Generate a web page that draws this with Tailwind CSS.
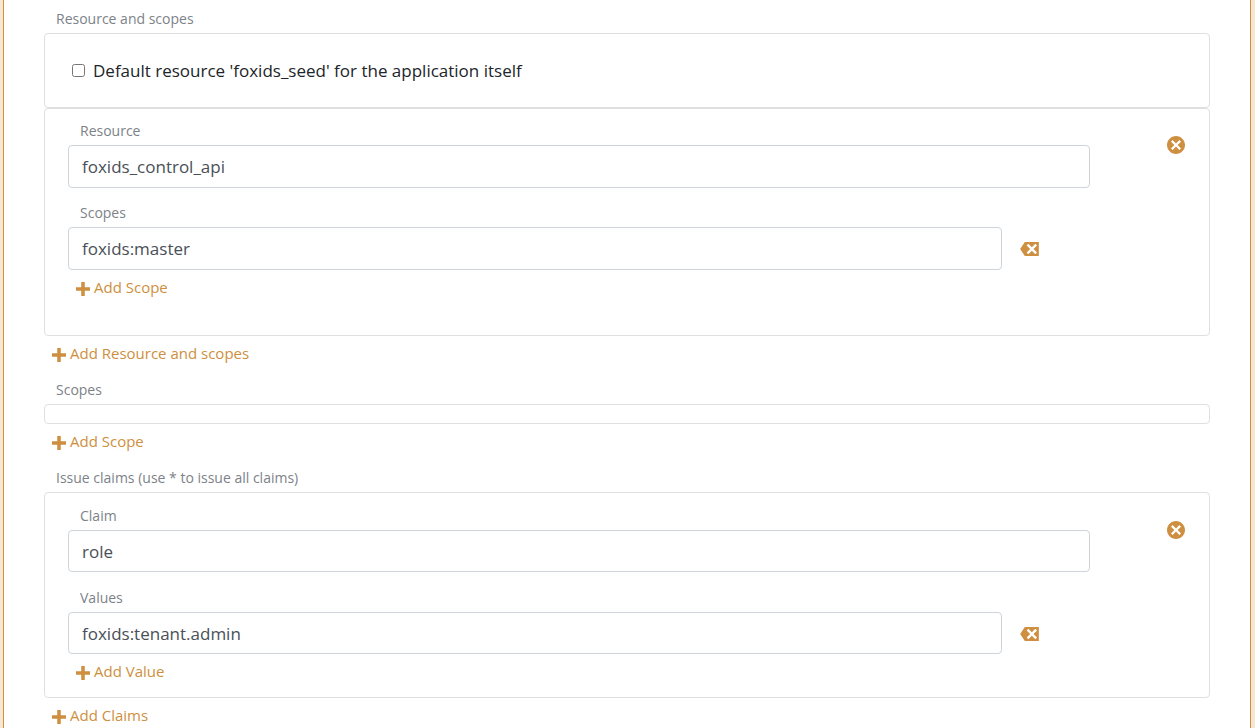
<!DOCTYPE html>
<html lang="en">
<head>
<meta charset="utf-8">
<meta name="viewport" content="width=device-width, initial-scale=1">
<title>Application resources and claims</title>
<script src="https://cdn.jsdelivr.net/npm/@tailwindcss/browser@4"></script>
</head>
<body class="bg-[#f7e6d3] px-[3px] font-['Segoe_UI','Open_Sans','Noto_Sans',sans-serif] text-[15px] text-[#7d8288]">
<svg class="hidden" aria-hidden="true">
  <symbol id="plus" viewBox="0 0 8 8"><path d="M3 0v3h-3v2h3v3h2v-3h3v-2h-3v-3h-2z"/></symbol>
  <symbol id="circle-x" viewBox="0 0 8 8"><path d="M4 0c-2.2 0-4 1.8-4 4s1.8 4 4 4 4-1.8 4-4-1.8-4-4-4zm-1.5 1.78l1.5 1.5 1.5-1.5.72.72-1.5 1.5 1.5 1.5-.72.72-1.5-1.5-1.5 1.5-.72-.72 1.5-1.5-1.5-1.5.72-.72z"/></symbol>
  <symbol id="delete" viewBox="0 0 8 6"><path d="M2 0l-2 3 2 3h6v-6h-6zm1.5.78l1.5 1.5 1.5-1.5.72.72-1.5 1.5 1.5 1.5-.72.72-1.5-1.5-1.5 1.5-.72-.72 1.5-1.5-1.5-1.5.72-.72z"/></symbol>
</svg>
<main class="mr-px min-h-screen border-x border-[#ce8f40] bg-white px-10 pt-[7px]">
  <form>
    <section>
      <h2 class="pb-[2px] pl-3 text-sm leading-6">Resource and scopes</h2>
      <div class="flex h-[75px] items-center rounded border border-[#dfdfdf] px-[27px]">
        <label class="flex items-center gap-2 text-[17px] text-[#212529]"><input type="checkbox" class="size-[13px]">Default resource 'foxids_seed' for the application itself</label>
      </div>
      <div class="flex rounded border border-[#dfdfdf] px-[23px] pt-[10px] pb-[29px]">
        <div class="flex-1">
          <label for="resource" class="block pb-[2px] pl-3 text-sm leading-6">Resource</label>
          <input id="resource" type="text" value="foxids_control_api" class="block h-[43px] w-full rounded border border-[#ced4da] px-[13px] text-[17px] text-[#495057]">
          <label for="scope" class="mt-[13px] block pb-[2px] pl-3 text-sm leading-6">Scopes</label>
          <div class="flex items-center">
            <input id="scope" type="text" value="foxids:master" class="block h-[43px] min-w-0 flex-1 rounded border border-[#ced4da] px-[13px] text-[17px] text-[#495057]">
            <button type="button" aria-label="Remove scope" class="w-[88px] pt-px pl-[18px] text-[#ce8f40]"><svg class="h-[14px] w-[19px] fill-current"><use href="#delete"/></svg></button>
          </div>
          <button type="button" class="flex h-9 items-center gap-1 pb-[2px] pl-2 text-[#ce8f40]"><svg class="mt-[3px] size-[14px] fill-current"><use href="#plus"/></svg>Add Scope</button>
        </div>
        <div class="flex w-24 items-start justify-end pt-[17px] pr-px">
          <button type="button" aria-label="Remove resource" class="text-[#ce8f40]"><svg class="size-[18px] fill-current"><use href="#circle-x"/></svg></button>
        </div>
      </div>
      <button type="button" class="flex h-9 items-center gap-1 pb-[2px] pl-2 text-[#ce8f40]"><svg class="mt-[3px] size-[14px] fill-current"><use href="#plus"/></svg>Add Resource and scopes</button>
    </section>
    <section class="mt-[6px]">
      <h2 class="pb-[2px] pl-3 text-sm leading-6">Scopes</h2>
      <div class="h-5 rounded border border-[#dfdfdf]"></div>
      <button type="button" class="flex h-9 items-center gap-1 pb-[2px] pl-2 text-[#ce8f40]"><svg class="mt-[3px] size-[14px] fill-current"><use href="#plus"/></svg>Add Scope</button>
    </section>
    <section class="mt-[6px]">
      <h2 class="pb-[2px] pl-3 text-sm leading-6">Issue claims (use * to issue all claims)</h2>
      <div class="flex rounded border border-[#dfdfdf] px-[23px] pt-[11px] pb-[7px]">
        <div class="flex-1">
          <label for="claim" class="block pb-[2px] pl-3 text-sm leading-6">Claim</label>
          <input id="claim" type="text" value="role" class="block h-[42px] w-full rounded border border-[#ced4da] px-[13px] text-[17px] text-[#495057]">
          <label for="value" class="mt-[14px] block pb-[2px] pl-3 text-sm leading-6">Values</label>
          <div class="flex items-center">
            <input id="value" type="text" value="foxids:tenant.admin" class="block h-[42px] min-w-0 flex-1 rounded border border-[#ced4da] px-[13px] text-[17px] text-[#495057]">
            <button type="button" aria-label="Remove value" class="w-[88px] pt-px pl-[18px] text-[#ce8f40]"><svg class="h-[14px] w-[19px] fill-current"><use href="#delete"/></svg></button>
          </div>
          <button type="button" class="flex h-9 items-center gap-1 pb-[2px] pl-2 text-[#ce8f40]"><svg class="mt-[3px] size-[14px] fill-current"><use href="#plus"/></svg>Add Value</button>
        </div>
        <div class="flex w-24 items-start justify-end pt-[17px] pr-px">
          <button type="button" aria-label="Remove claim" class="text-[#ce8f40]"><svg class="size-[18px] fill-current"><use href="#circle-x"/></svg></button>
        </div>
      </div>
      <button type="button" class="flex h-9 items-center gap-1 pb-[2px] pl-2 text-[#ce8f40]"><svg class="mt-[3px] size-[14px] fill-current"><use href="#plus"/></svg>Add Claims</button>
    </section>
  </form>
</main>
</body>
</html>
